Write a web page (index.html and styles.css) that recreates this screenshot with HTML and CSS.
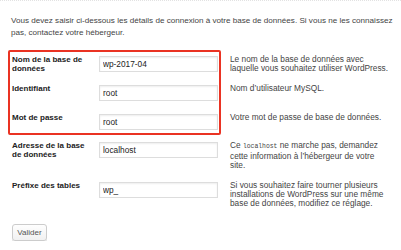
FILE: index.html
```html
<!DOCTYPE html>
<html lang="fr">
  <head>
    <meta charset="UTF-8" />
    <meta name="viewport" content="width=device-width, initial-scale=1.0" />
    <title>Configuration de la base de données</title>
    <link rel="stylesheet" href="styles.css">
  </head>
  <body>
    <div class="top-rule"></div>

    <!-- Setup form -->
    <div class="setup">
      <p class="intro">
        Vous devez saisir ci-dessous les détails de connexion à votre base de données. Si vous ne les connaissez
        pas, contactez votre hébergeur.
      </p>

      <form id="setupForm">
        <div class="highlight">
          <div class="row">
            <label for="dbname">Nom de la base de données</label>
            <input type="text" id="dbname" name="dbname" value="wp-2017-04" />
            <p class="desc">Le nom de la base de données avec laquelle vous souhaitez utiliser WordPress.</p>
          </div>
          <div class="row">
            <label for="uname">Identifiant</label>
            <input type="text" id="uname" name="uname" value="root" />
            <p class="desc">Nom d’utilisateur MySQL.</p>
          </div>
          <div class="row">
            <label for="pwd">Mot de passe</label>
            <input type="text" id="pwd" name="pwd" value="root" />
            <p class="desc">Votre mot de passe de base de données.</p>
          </div>
        </div>

        <div class="row">
          <label for="dbhost">Adresse de la base de données</label>
          <input type="text" id="dbhost" name="dbhost" value="localhost" />
          <p class="desc">Ce <code>localhost</code> ne marche pas, demandez cette information à l’hébergeur de votre site.</p>
        </div>
        <div class="row">
          <label for="prefix">Préfixe des tables</label>
          <input type="text" id="prefix" name="prefix" value="wp_" />
          <p class="desc">Si vous souhaitez faire tourner plusieurs installations de WordPress sur une même base de données, modifiez ce réglage.</p>
        </div>

        <button type="submit" class="submit">Valider</button>
      </form>
    </div>
  </body>
</html>
```

FILE: styles.css
```css
body {
  font-family: "Liberation Sans", Arial, sans-serif;
  color: #444;
  background-color: #fff;
  margin: 0;
  padding: 0;
}
.top-rule {
  border-top: 1px dotted #e2e2e2;
}
.setup {
  padding: 0 8px;
}
.intro {
  font-size: 8.1px;
  line-height: 12px;
  margin: 14px 0 11px 3px;
}
.highlight {
  width: 209px;
  border: 2px solid #ea3323;
  border-radius: 2px;
}
.row {
  display: grid;
  grid-template-columns: 87px 119px 172px;
  grid-auto-rows: minmax(18px, auto);
  column-gap: 0;
  align-items: start;
  width: 380px;
  padding: 3px 0 8px 2px;
}
.highlight .row:last-child {
  padding-bottom: 2px;
}
form > .row {
  padding: 6px 0 6px 4px;
}
label {
  font-size: 8px;
  font-weight: bold;
  line-height: 9px;
  color: #222;
  padding-right: 10px;
}
input {
  font-family: "Liberation Sans", Arial, sans-serif;
  font-size: 8.3px;
  color: #222;
  height: 16px;
  margin: 1px 0 0;
  padding: 0 3px;
  border: 1px solid #ddd;
  box-shadow: inset 0 1px 2px rgba(0, 0, 0, 0.07);
  box-sizing: border-box;
  background-color: #fff;
}
.desc {
  font-size: 8.3px;
  line-height: 8.8px;
  margin: 0 0 0 12px;
}
.desc code {
  font-family: "Liberation Mono", "Courier New", monospace;
  font-size: 6.4px;
}
.submit {
  font-family: "Liberation Sans", Arial, sans-serif;
  font-size: 8px;
  color: #555;
  margin: 10px 0 0 4px;
  height: 17px;
  width: 35px;
  padding: 0;
  background: linear-gradient(#fefefe, #f1f1f1);
  border: 1px solid #ccc;
  border-radius: 3px;
  box-shadow: 0 1px 0 #ddd;
  cursor: pointer;
}
```
